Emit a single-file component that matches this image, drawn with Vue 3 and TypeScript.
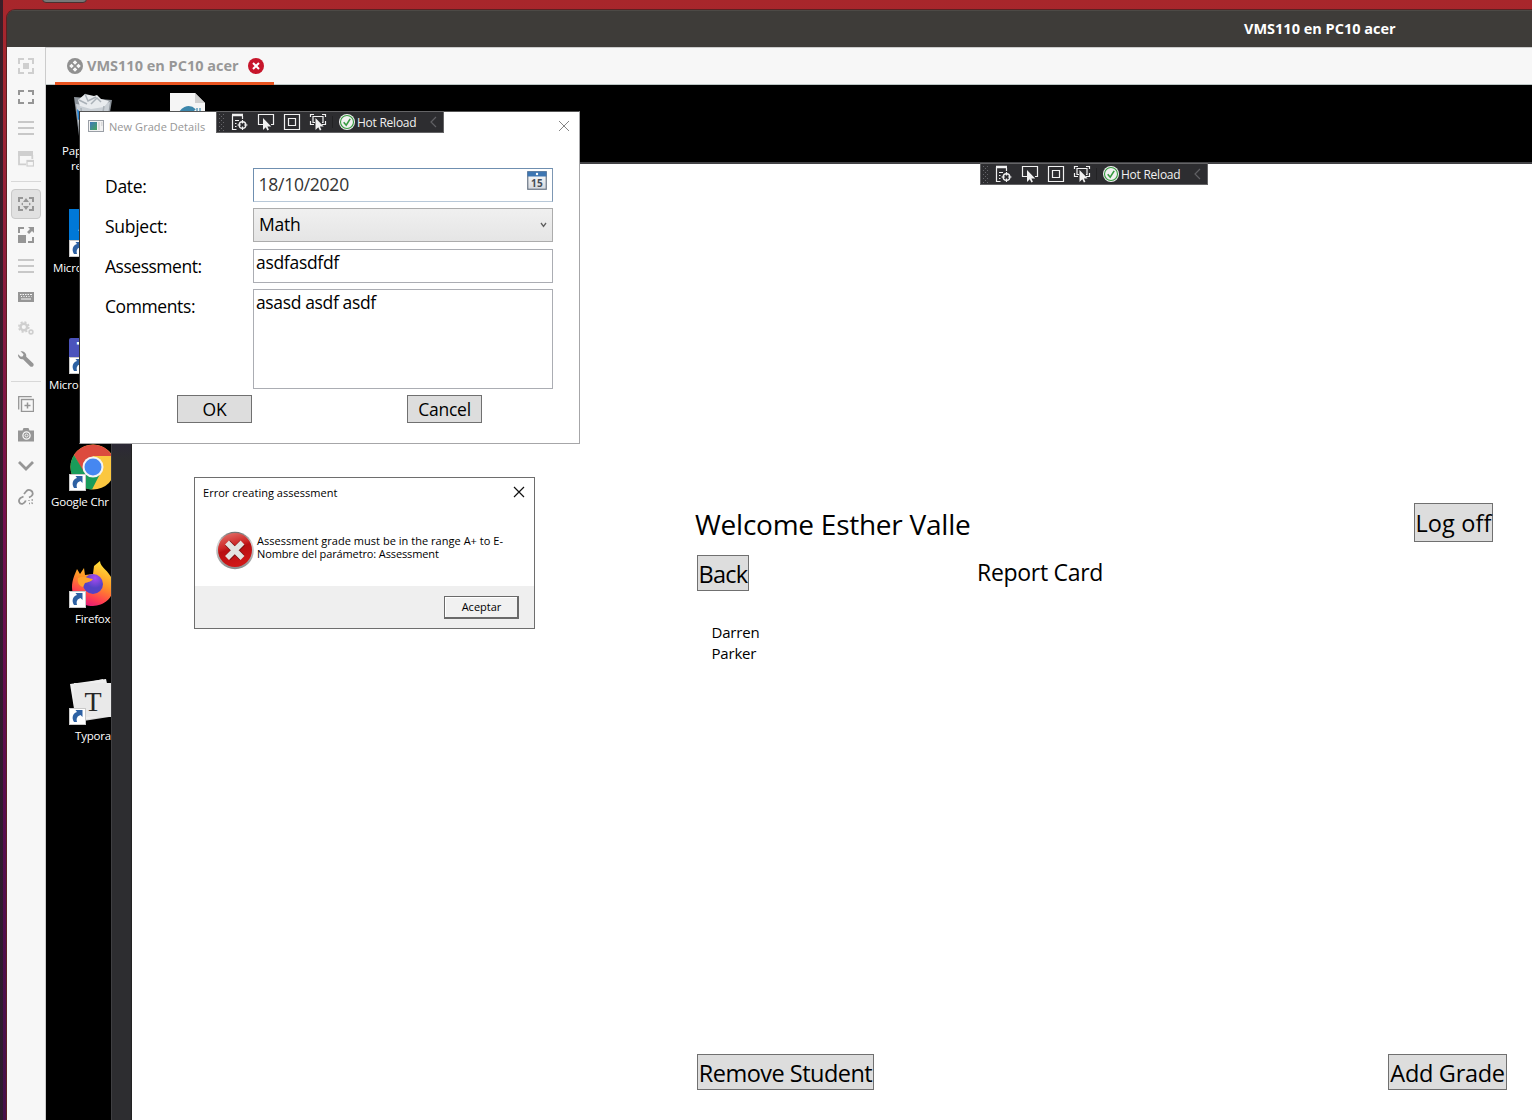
<script setup lang="ts">
interface ToolItem {
  id: string
  kind: 'tool' | 'separator'
  active?: boolean
  dim?: boolean
}

interface Shortcut {
  id: string
  lines: string[]
  x: number
  y: number
  textX: number
  textY: number
}

const title = 'VMS110 en PC10 acer'

const tools: ToolItem[] = [
  { id: 'fit', kind: 'tool', dim: true },
  { id: 'fullscreen', kind: 'tool' },
  { id: 'menu', kind: 'tool', dim: true },
  { id: 'window', kind: 'tool', dim: true },
  { id: 'sep1', kind: 'separator' },
  { id: 'dynamic', kind: 'tool', active: true },
  { id: 'scale', kind: 'tool' },
  { id: 'menu', kind: 'tool', dim: true },
  { id: 'keyboard', kind: 'tool' },
  { id: 'gears', kind: 'tool', dim: true },
  { id: 'wrench', kind: 'tool' },
  { id: 'sep2', kind: 'separator' },
  { id: 'duplicate', kind: 'tool' },
  { id: 'camera', kind: 'tool' },
  { id: 'chevron', kind: 'tool' },
  { id: 'unlink', kind: 'tool' },
]

const shortcuts: Shortcut[] = [
  { id: 'bin', lines: ['Pap', 're'], x: 69, y: 92, textX: 62, textY: 143 },
  { id: 'file', lines: [], x: 165, y: 92, textX: 165, textY: 144 },
  { id: 'azure', lines: ['Micro'], x: 69, y: 209, textX: 53, textY: 260 },
  { id: 'teams', lines: ['Micro'], x: 69, y: 326, textX: 49, textY: 377 },
  { id: 'chrome', lines: ['Google Chr'], x: 69, y: 443, textX: 51, textY: 494 },
  { id: 'firefox', lines: ['Firefox'], x: 69, y: 560, textX: 75, textY: 611 },
  { id: 'typora', lines: ['Typora'], x: 69, y: 677, textX: 75, textY: 728 },
]

const debugBars = [
  { id: 'main', x: 980, y: 163 },
  { id: 'dialog', x: 216, y: 111 },
]
</script>

<template>
  <div class="screen">
    <div class="shelf"></div>
    <div class="host">
      <header class="titlebar"><span>{{ title }}</span></header>
      <div class="host-body">
        <nav class="sidebar">
          <template v-for="(t, i) in tools" :key="i">
            <div v-if="t.kind === 'separator'" class="sep"></div>
            <button v-else class="tool" :class="{ active: t.active, dim: t.dim }">
              <svg width="16" height="16" viewBox="0 0 16 16" fill="none" stroke="currentColor">
                <template v-if="t.id === 'fit'">
                  <path d="M1 6V1h5M10 1h5v5M15 10v5h-5M6 15H1v-5" stroke-width="2" />
                  <rect x="5" y="5" width="6" height="6" fill="currentColor" stroke="none" />
                </template>
                <path v-else-if="t.id === 'fullscreen'" d="M1 6V2h5M10 2h5v4M15 10v4h-5M6 14H1v-4" stroke-width="2" />
                <path v-else-if="t.id === 'menu'" d="M0 2h16M0 8h16M0 14h16" stroke="#c8c8c8" stroke-width="2.200" />
                <template v-else-if="t.id === 'window'">
                  <path d="M1 4v9.300h7M14.300 4v4" stroke-width="1.800" />
                  <path d="M0 0h15v5H0z" fill="currentColor" stroke="none" />
                  <rect x="9" y="9.500" width="6.500" height="5.500" stroke-width="1.200" />
                  <path d="M9 10h6.500" stroke-width="2" />
                </template>
                <template v-else-if="t.id === 'dynamic'">
                  <path d="M1 6V2h4M11 2h4v4M15 10v4h-4M5 14H1v-4" stroke-width="2" />
                  <path d="M8 2l3 4H5zM8 14l3-4H5zM3 8l2-1.500v3zM13 8l-2-1.500v3z" fill="currentColor" stroke="none" />
                </template>
                <template v-else-if="t.id === 'scale'">
                  <path d="M1 6V1h5M15 10v5h-5" stroke-width="2" />
                  <path d="M0 8h8v8H0zM10 0h6v6l-2-2-3 3-2-2 3-3z" fill="currentColor" stroke="none" />
                </template>
                <template v-else-if="t.id === 'keyboard'">
                  <rect x="0" y="3" width="16" height="10" fill="currentColor" stroke="none" />
                  <path d="M2 5.500h1.500m1 0H6m1 0h1.500m1 0H11m1 0h2M3 7.500h1m1.500 0h1m1.500 0h1m1.500 0h1m1.500 0h.5M3 10h10" stroke="#f7f7f7" stroke-width="1.100" />
                </template>
                <template v-else-if="t.id === 'gears'">
                  <circle cx="5.800" cy="7" r="3.300" stroke-width="2.400" />
                  <circle cx="5.800" cy="7" r="5" stroke-width="1.600" stroke-dasharray="2.100 1.830" />
                  <circle cx="13" cy="12" r="1.900" stroke-width="1.600" />
                </template>
                <path v-else-if="t.id === 'wrench'" d="M2.500.3l3 3-.6 2-2 .5L0 3.200c-.3 3 1.800 5.500 5 5l7.300 7.200c2 1.400 4.300-.8 3-2.900L8.200 5.800C8.800 2.300 6 0 2.500.3z" fill="currentColor" stroke="none" />
                <template v-else-if="t.id === 'duplicate'">
                  <path d="M.7 13.500V.7h13" stroke-width="1.300" />
                  <rect x="3.500" y="3.500" width="12" height="12" stroke-width="1.400" />
                  <path d="M9.500 6.500v6M6.500 9.500h6" stroke-width="1.500" />
                </template>
                <template v-else-if="t.id === 'camera'">
                  <path d="M0 3.500h4.500L5.500 1h5l1 2.500H16v11H0z" fill="currentColor" stroke="none" />
                  <circle cx="8.500" cy="8.500" r="3.600" stroke="#f7f7f7" stroke-width="1.300" />
                  <circle cx="8.500" cy="8.500" r="1.500" stroke="#f7f7f7" stroke-width="1" />
                </template>
                <path v-else-if="t.id === 'chevron'" d="M1 4l7 7 7-7" stroke-width="2.800" />
                <template v-else>
                  <path d="M5.500 7.500l-3 1.500c-3 2.500-1 6.500 2 5.800 1.800-.4 2.800-2 3.300-3.300M6 5l2.500-3c2.500-2.300 6.500-.3 6.200 3-.2 2-2 2.800-3.700 3.500" stroke-width="1.800" />
                  <path d="M11 11v1M13.500 11h1.500M11 14.500h1M13.500 13.500l1.200 1.200" stroke-width="1.300" />
                </template>
              </svg>
            </button>
          </template>
        </nav>
        <div class="viewer">
          <div class="tabs">
            <div class="tab">
              <svg width="16" height="16" viewBox="0 0 16 16">
                <circle cx="8" cy="8" r="8" fill="#909090" />
                <path d="M8 2.200L10.300 4.500 8 6.800 5.700 4.500zM8 9.200l2.300 2.300L8 13.800l-2.300-2.300zM4.500 5.700L6.800 8l-2.300 2.300L2.200 8zM11.500 5.700L13.800 8l-2.300 2.300L9.200 8z" fill="#f7f7f7" />
              </svg>
              <span>{{ title }}</span>
              <svg width="16" height="16" viewBox="0 0 16 16">
                <circle cx="8" cy="8" r="8" fill="#c7162b" />
                <path d="M5 5l6 6M11 5l-6 6" stroke="#fff" stroke-width="2" />
              </svg>
            </div>
          </div>
          <div class="remote"></div>
        </div>
      </div>
    </div>

    <!-- Remote desktop shortcuts -->
    <template v-for="s in shortcuts" :key="s.id">
      <svg class="float" :style="{ left: s.x + 'px', top: s.y + 'px' }" width="48" height="48" viewBox="0 0 48 48">
        <template v-if="s.id === 'bin'">
          <path d="M5 5l38 3-6 36H10z" fill="#8d949b" />
          <path d="M7 12l14 2 20-4-5 32H11z" fill="#c9cfd5" />
          <path d="M9 8l7-6 9 2 3-1 4 4 8 2-5 6-13 2-11-3z" fill="#e8ebee" />
          <path d="M16 2l3 7 8-4M22 12l6-6 4 4M10 8l8 4M12 16l2 22M35 14l-3 18" stroke="#aab1b8" stroke-width="1.500" fill="none" />
          <path d="M8 17l4 4-1 6-2 1z" fill="#1e7fd0" />
        </template>
        <template v-else-if="s.id === 'file'">
          <path d="M5 1h25l10 10v36H5z" fill="#f5f5f5" />
          <path d="M30 1v10h10z" fill="#cfcfcf" />
          <path d="M15 26c1-9 9-12 14-7" fill="none" stroke="#3c86ab" stroke-width="5" />
          <path d="M32 16v6M35 16v6" stroke="#3c86ab" stroke-width="1.200" />
        </template>
        <template v-else-if="s.id === 'azure'">
          <path d="M0 0h48v48H0z" fill="#0078d7" />
          <path d="M9 22l6-13 8 13z" fill="#6bb5ee" />
        </template>
        <template v-else-if="s.id === 'teams'">
          <rect y="12" width="30" height="27" rx="2" fill="#4b53bc" />
          <text x="13" y="30" text-anchor="middle" font-size="19" font-weight="700" fill="#fff">T</text>
        </template>
        <template v-else-if="s.id === 'chrome'">
          <circle cx="24" cy="24" r="22.500" fill="#fbc740" />
          <path d="M5 12A22.500 22.500 0 0 1 43.500 13L24 13 14 29z" fill="#dc4b3e" />
          <path d="M5 12l10 17 17 0-9 17.500A22.500 22.500 0 0 1 5 12z" fill="#199c5a" />
          <circle cx="24" cy="24" r="10.500" fill="#f4f4f4" />
          <circle cx="24" cy="24" r="8.500" fill="#4587f1" />
        </template>
        <template v-else-if="s.id === 'firefox'">
          <defs>
            <linearGradient id="flame" x1=".7" y1="0" x2=".3" y2="1">
              <stop offset="0" stop-color="#ffe43a" /><stop offset=".45" stop-color="#ff9526" />
              <stop offset=".78" stop-color="#ff3d50" /><stop offset="1" stop-color="#dd157e" />
            </linearGradient>
            <radialGradient id="globe" cx=".6" cy=".2"><stop offset="0" stop-color="#a84bf3" /><stop offset="1" stop-color="#5442c4" /></radialGradient>
          </defs>
          <path d="M3 27C3 20 6 14 8 9l3 5 4-6 1 7 8-1 1-8 6-5c0 6 9 10 12 18 6 15-6 27-19 27C12 46 3 38 3 27z" fill="url(#flame)" />
          <circle cx="24" cy="24" r="10" fill="url(#globe)" />
          <path d="M9 18c6-3 9 0 15 1-2 3-5 3-8 4l-2 4c-4-1-6-5-5-9z" fill="#ffa42c" />
        </template>
        <template v-else>
          <path d="M2 9l32-7 6 38-32 5z" fill="#d9d9d9" />
          <path d="M1 7l36-5 8 36-38 6z" fill="#efefef" />
          <path d="M5 6h39v34H5z" fill="#e9e9e9" />
          <text class="serif" x="24" y="34" text-anchor="middle" font-size="28" fill="#272727">T</text>
        </template>
        <g v-if="s.id !== 'bin' && s.id !== 'file'">
          <rect x=".5" y="31.500" width="16" height="16" fill="#fff" stroke="#c9c9c9" />
          <path d="M5 45c-3-5-.5-9 3-10l-1.500-2h7v7l-2-2c-3 1-4.500 3-3.500 7z" fill="#2d61a3" />
        </g>
      </svg>
      <div v-if="s.lines.length" class="float caption" :style="{ left: s.textX + 'px', top: s.textY + 'px' }">
        <div v-for="(l, i) in s.lines" :key="l" :class="{ second: i === 1 }">{{ l }}</div>
      </div>
    </template>

    <!-- School grades application -->
    <div class="frame-strip"></div>
    <main class="app">
      <div class="row head">
        <h1>Welcome Esther Valle</h1>
        <button class="big logoff">Log off</button>
      </div>
      <div class="row sub">
        <button class="big back">Back</button>
        <h2>Report Card</h2>
      </div>
      <div class="student"><div>Darren</div><div>Parker</div></div>
      <div class="row foot">
        <button class="big remove">Remove Student</button>
        <button class="big add">Add Grade</button>
      </div>
    </main>

    <section class="dialog">
      <div class="dialog-title">
        <svg width="16" height="12" viewBox="0 0 16 12">
          <defs><linearGradient id="app-icon" x2="1" y2="1"><stop stop-color="#3f78bd" /><stop offset="1" stop-color="#45a35a" /></linearGradient></defs>
          <rect x=".5" y=".5" width="15" height="11" fill="#f2f2f2" stroke="#9a9fa6" />
          <rect x="2" y="2" width="7" height="8" fill="url(#app-icon)" />
          <path d="M10 2h2v8h-2zM13 2h1.500v4H13z" fill="#dadada" />
        </svg>
        <span>New Grade Details</span>
        <svg class="close" width="12" height="12" viewBox="0 0 12 12"><path d="M1 1l10 10M11 1L1 11" stroke="#858585" stroke-width="1" /></svg>
      </div>
      <div class="form">
        <label class="l-date">Date:</label>
        <div class="field date">
          <span>18/10/2020</span>
          <svg width="20" height="19" viewBox="0 0 20 19">
            <defs><linearGradient id="cal" x2="0" y2="1"><stop stop-color="#fff" /><stop offset="1" stop-color="#d5d9df" /></linearGradient></defs>
            <rect x=".75" y=".75" width="18.500" height="17.500" fill="url(#cal)" stroke="#6a7685" stroke-width="1.200" />
            <rect x=".5" y=".5" width="19" height="5" fill="#3e76b2" />
            <circle cx="10" cy="3" r="1.200" fill="#fff" />
            <text x="10" y="15.500" text-anchor="middle" font-size="10" font-weight="700" letter-spacing=".4" fill="#454c55">15</text>
          </svg>
        </div>
        <label class="l-subject">Subject:</label>
        <div class="field select">
          <span>Math</span>
          <svg width="7" height="6" viewBox="0 0 7 6"><path d="M1 1l2.500 3.500L6 1" fill="none" stroke="#606060" stroke-width="1.300" /></svg>
        </div>
        <label class="l-assess">Assessment:</label>
        <div class="field text assess"><span>asdfasdfdf</span></div>
        <label class="l-comments">Comments:</label>
        <div class="field text comments"><span>asasd asdf asdf</span></div>
      </div>
      <div class="actions">
        <button>OK</button>
        <button class="cancel">Cancel</button>
      </div>
    </section>

    <section class="error">
      <div class="error-title">
        <span>Error creating assessment</span>
        <svg width="12" height="12" viewBox="0 0 12 12"><path d="M1 1l10 10M11 1L1 11" stroke="#111" stroke-width="1.200" /></svg>
      </div>
      <div class="error-body">
        <svg width="39" height="40" viewBox="0 0 39 40">
          <defs>
            <linearGradient id="err" x2=".3" y2="1"><stop stop-color="#e57a72" /><stop offset=".45" stop-color="#cd2626" /><stop offset=".55" stop-color="#b80f12" /><stop offset="1" stop-color="#cf1717" /></linearGradient>
            <linearGradient id="rim" x2="0" y2="1"><stop stop-color="#6d6d6d" /><stop offset=".3" stop-color="#d5d5d5" /><stop offset="1" stop-color="#8a8a8a" /></linearGradient>
          </defs>
          <circle cx="19" cy="19.500" r="18.800" fill="url(#rim)" />
          <circle cx="19" cy="19" r="17" fill="url(#err)" />
          <path d="M11.500 12l14.500 14.500M26.500 12L12 26.500" stroke="#7e1212" stroke-width="7" />
          <path d="M11 11.500l15.500 15.500M26.500 11.500L11 27" stroke="#e3e3e0" stroke-width="5.500" />
        </svg>
        <p><span class="m1">Assessment grade must be in the range A+ to E-</span><br><span class="m2">Nombre del parámetro: Assessment</span></p>
      </div>
      <div class="error-foot"><button>Aceptar</button></div>
    </section>

    <div v-for="b in debugBars" :key="b.id" class="debug" :style="{ left: b.x + 'px', top: b.y + 'px' }">
      <svg width="120" height="20" viewBox="0 0 120 20" fill="none" stroke="#f1f1f1">
        <path d="M2.500 2v17M6.500 2v17" stroke="#66666a" stroke-dasharray="1 3" />
        <path d="M4.500 4v15" stroke="#66666a" stroke-dasharray="1 3" />
        <path d="M15 3h11" stroke-width="2.500" />
        <path d="M15.500 3v14.500h4M18 8.500h4M18 11.500h1.500M18 14.500h1.500M25.500 4v3" stroke-width="1.200" />
        <circle cx="25.500" cy="13" r="3.300" stroke-width="1.400" />
        <path d="M25.500 8v3.500M25.500 14.500V18M20.500 13H24M27 13h3.500" stroke-width="1.200" />
        <path d="M46 12.500h-4.500v-10h15v10H54" stroke-width="1.200" />
        <path d="M46 6v12l2.800-2.800 1.600 3.300 1.500-.7-1.500-3.300h3.800z" fill="#f1f1f1" stroke="none" />
        <path d="M67.500 2.500h15v15h-15zM71.500 6.500h7v7h-7z" stroke-width="1.200" />
        <path d="M93.500 5V2.500H97M105 2.500h3.500V5M93.500 9v3.500H97M105 12.500h3.500V9M98 10.500h-2v-6h10v6h-1" stroke-width="1.200" />
        <path d="M98.500 6v12l2.800-2.800 1.600 3.300 1.500-.7-1.500-3.300h3.800z" fill="#f1f1f1" stroke="none" />
        <path d="M115.500 4v12" stroke="#222224" />
      </svg>
      <svg class="check" width="16" height="16" viewBox="0 0 16 16">
        <circle cx="8" cy="8" r="8" fill="#f1f1f1" /><circle cx="8" cy="8" r="6.500" fill="none" stroke="#379b40" stroke-width="1.100" />
        <path d="M4.700 8.200l2.500 3 4-6.400" fill="none" stroke="#379b40" stroke-width="1.600" />
      </svg>
      <span>Hot Reload</span>
      <svg width="7" height="12" viewBox="0 0 7 12"><path d="M6 1L1 6l5 5" fill="none" stroke="#606064" stroke-width="1.200" /></svg>
    </div>
  </div>
</template>

<style>
body { margin: 0; overflow: hidden; }
</style>

<style scoped>
* { box-sizing: border-box; }
button { margin: 0; padding: 0; font: inherit; color: inherit; }
.screen {
  position: relative; width: 1532px; height: 1120px; overflow: hidden;
  font-family: "Open Sans", "Noto Sans", sans-serif; color: #000; white-space: nowrap;
  background: linear-gradient(90deg, rgba(40, 30, 40, .85) 3px, transparent 3px), linear-gradient(#a8262b 0, #a22633 90px, #8c1c3d 280px, #74104f 520px, #5a0d50 800px, #45104a 1120px);
}
.serif { font-family: "Liberation Serif", serif; }
.shelf { position: absolute; left: 42px; top: -8px; width: 45px; height: 11px; border-radius: 4px; background: #777; border: 1px solid #4a3030; }
.float { position: absolute; }
.host { position: absolute; left: 7px; top: 10px; width: 1525px; height: 1110px; border-radius: 8px 0 0; overflow: hidden; box-shadow: 0 0 0 1px #5a2022; display: flex; flex-direction: column; }
.titlebar { flex: 0 0 37px; background: #3e3c39; border-top: 1px solid #4c4a46; padding-left: 1237px; color: #fff; font-weight: 700; font-size: 14.500px; line-height: 35px; }
.host-body { flex: 1; display: flex; }
.sidebar { width: 39px; background: #f7f7f7; border-right: 1px solid #ccc; padding-top: 4px; display: flex; flex-direction: column; align-items: center; gap: 1px; }
.tool { width: 30px; height: 30px; flex: none; border: 1px solid transparent; border-radius: 4px; background: none; color: #969696; display: flex; align-items: center; justify-content: center; }
.tool.dim { color: #cfcfcf; }
.tool.active { background: #e1e1e1; border-color: #c9c9c9; }
.sep { width: 30px; height: 13px; flex: none; background: linear-gradient(#d8d8d8, #d8d8d8) 0 6px / 100% 1px no-repeat; }
.viewer { flex: 1; display: flex; flex-direction: column; }
.tabs { height: 38px; flex: none; background: #f7f7f7; border-top: 1px solid #ccc; border-bottom: 1px solid #bcc6c4; padding-left: 9px; }
.tab { width: 219px; height: 37px; border-bottom: 3px solid #e95420; padding: 1px 0 0 12px; display: flex; align-items: center; gap: 4px; color: #979797; font-weight: 700; font-size: 14.500px; line-height: 34px; }
.tab span { margin-right: 5px; }
.remote { flex: 1; background: #000; }
.caption { color: #fff; font-size: 11.500px; letter-spacing: -.2px; line-height: 15px; }
.caption .second { padding-left: 9px; }

.frame-strip { position: absolute; left: 111px; top: 443px; width: 21px; height: 677px; background: linear-gradient(#2c2936 0, #2d2d30 16px); border-left: 1px solid #3f3f42; border-right: 1px solid #222; }
.app { position: absolute; left: 132px; top: 162px; width: 1400px; height: 958px; border-top: 2px solid #434346; background: #fff; padding-top: 339px; display: flex; flex-direction: column; }
.row { display: flex; flex: none; }
h1, h2, p { margin: 0; font-weight: 400; }
.head { height: 52px; padding: 0 39px 0 563px; justify-content: space-between; }
h1 { font-size: 28px; letter-spacing: -.25px; line-height: 43px; }
h2 { font-size: 23px; letter-spacing: -.3px; line-height: 34px; }
.big { height: 36px; background: #ddd; border: 1px solid #707070; font-size: 23.500px; line-height: 36px; text-align: center; overflow: visible; display: flex; justify-content: center; }
.logoff { width: 79px; height: 39px; line-height: 38px; letter-spacing: .12px; }
.back { width: 52px; letter-spacing: -.7px; }
.sub { padding-left: 565px; gap: 228px; }
.student { margin: 31px 0 0 579.500px; font-size: 15px; letter-spacing: -.2px; line-height: 21px; }
.foot { margin: auto 25px 30px 565px; justify-content: space-between; }
.remove { width: 177px; letter-spacing: -.52px; }
.add { width: 119px; letter-spacing: -.3px; }

.dialog { position: absolute; left: 79px; top: 111px; width: 501px; height: 333px; background: #fff; border: 1px solid #a6a6a8; border-left-color: #333; border-top-color: #555; display: flex; flex-direction: column; font-size: 17.500px; }
.dialog-title { height: 27px; flex: none; padding: 0 9px 0 8px; display: flex; align-items: center; font-size: 11px; letter-spacing: .06px; color: #969696; gap: 5px; }
.dialog-title span { padding-top: 2px; }
.close { margin-left: auto; }
.form { padding: 29px 26px 0 25px; display: grid; grid-template-columns: 148px 300px; grid-template-rows: 40px 41px 40px 100px; }
label { line-height: 37px; letter-spacing: -.28px; }
.l-assess { letter-spacing: -.48px; margin-top: -1px; }
.l-comments { letter-spacing: -.4px; margin-top: -1px; }
.field { height: 34px; border: 1px solid #abadb3; display: flex; justify-content: space-between; letter-spacing: -.25px; }
.date { border-color: #6f8fb0 #7d97b3 #b8c8d8 #6f8fb0; padding: 0 5px 0 4.500px; color: #333; line-height: 30px; }
.date svg { margin-top: 2px; }
.select { border-color: #acacac; background: linear-gradient(#f0f0f0, #e5e5e5); padding: 0 5px; line-height: 30px; }
.select svg { margin-top: 13px; }
.text { padding-left: 2px; line-height: 24px; letter-spacing: -.3px; }
.comments { height: 100px; letter-spacing: -.36px; }
.actions { display: flex; gap: 155px; padding: 6px 0 0 97px; }
.actions button { width: 75px; height: 28px; border: 1px solid #707070; background: #ddd; line-height: 27px; letter-spacing: -.05px; }
.actions .cancel { letter-spacing: -.24px; }

.error { position: absolute; left: 194px; top: 477px; width: 341px; height: 152px; background: #fff; border: 1px solid #6e6e6e; font-size: 11px; display: flex; flex-direction: column; letter-spacing: .03px; }
.error-title { height: 27px; padding: 0 9px 0 8px; display: flex; align-items: center; justify-content: space-between; }
.error-title span { padding-top: 1px; }
.error-body { flex: 1; display: flex; padding: 26px 0 0 20.500px; gap: 2.500px; }
.error-body p { line-height: 13px; padding-top: 3px; }
.m2 { letter-spacing: -.12px; }
.error-foot { height: 42px; flex: none; background: #efefef; display: flex; justify-content: flex-end; padding: 10px 15px 0 0; }
.error-foot button { width: 75px; height: 23px; background: #f1f1f1; border: 1px solid #6a6a6a; border-right-width: 2px; border-bottom-width: 2px; box-shadow: inset 1px 1px #fff; line-height: 20px; padding-left: 1px; }

.debug { position: absolute; width: 228px; height: 22px; border: 1px solid #646466; background: #2d2d30; color: #f1f1f1; font-size: 12px; letter-spacing: -.25px; display: flex; align-items: center; }
.debug .check { margin: 0 2px; }
.debug span { flex: 1; line-height: 20px; padding-top: 1px; }
.debug > svg:last-child { margin-right: 6px; }
</style>
